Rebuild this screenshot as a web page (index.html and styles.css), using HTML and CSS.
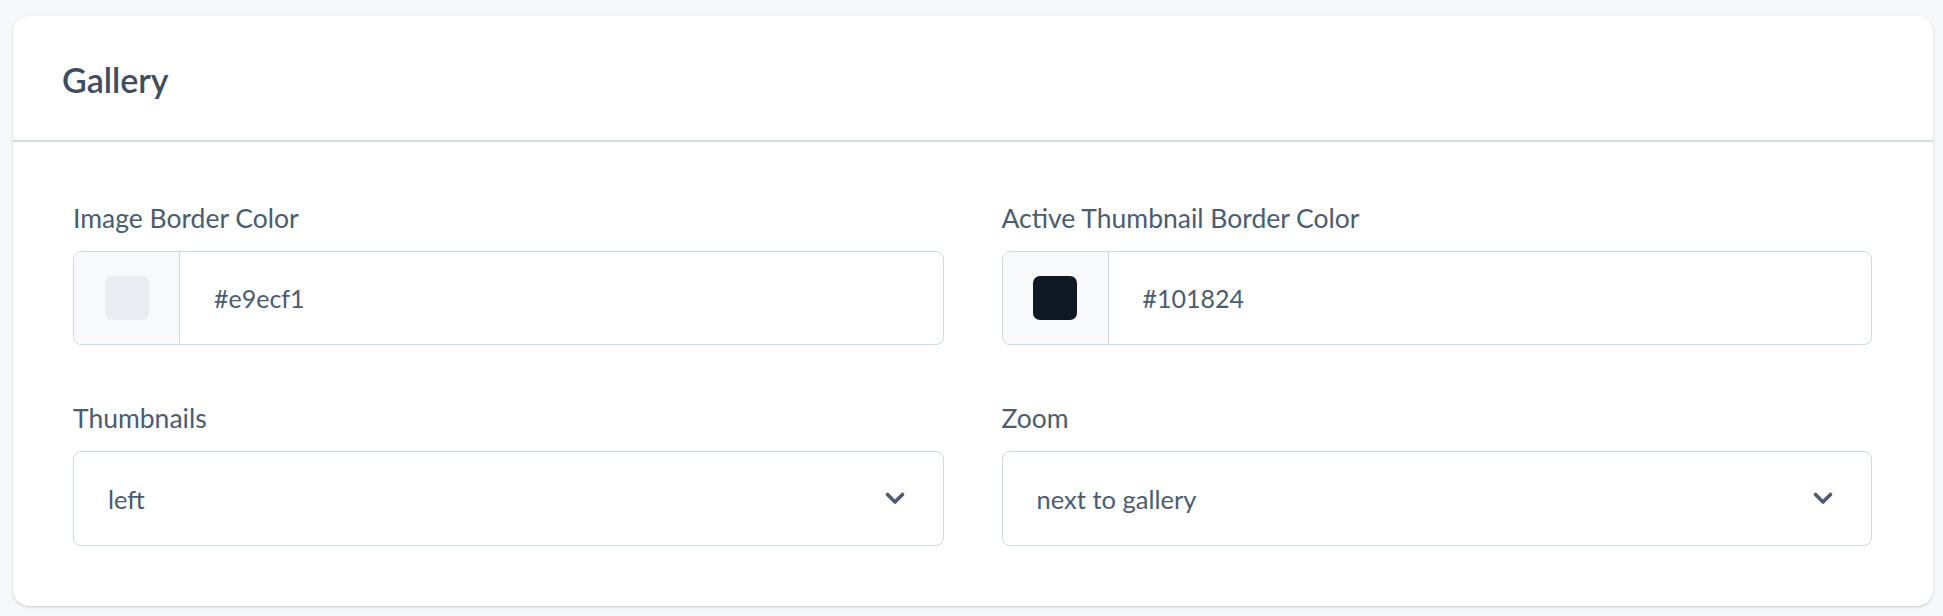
FILE: index.html
```html
<!DOCTYPE html>
<html lang="en">
<head>
<meta charset="utf-8">
<title>Gallery</title>
<link rel="stylesheet" href="styles.css">
</head>
<body>
<section class="card">
  <header class="card-header">
    <h2 class="card-title">Gallery</h2>
  </header>
  <div class="card-body">
    <div class="field">
      <label class="field-label">Image Border Color</label>
      <div class="color-input">
        <div class="swatch-cell"><span class="swatch swatch-light"></span></div>
        <div class="color-value">#e9ecf1</div>
      </div>
    </div>
    <div class="field">
      <label class="field-label">Active Thumbnail Border Color</label>
      <div class="color-input">
        <div class="swatch-cell"><span class="swatch swatch-dark"></span></div>
        <div class="color-value">#101824</div>
      </div>
    </div>
    <div class="field">
      <label class="field-label">Thumbnails</label>
      <div class="select">
        <span class="select-value">left</span>
        <svg class="chevron" width="20" height="13" viewBox="0 0 20 13"><path d="M2.5 2.5 L10 10 L17.5 2.5" fill="none" stroke="currentColor" stroke-width="3.6" stroke-linecap="round" stroke-linejoin="round"/></svg>
      </div>
    </div>
    <div class="field">
      <label class="field-label">Zoom</label>
      <div class="select">
        <span class="select-value">next to gallery</span>
        <svg class="chevron" width="20" height="13" viewBox="0 0 20 13"><path d="M2.5 2.5 L10 10 L17.5 2.5" fill="none" stroke="currentColor" stroke-width="3.6" stroke-linecap="round" stroke-linejoin="round"/></svg>
      </div>
    </div>
  </div>
</section>
</body>
</html>
```

FILE: styles.css
```css
html, body {
  margin: 0;
  padding: 0;
}
body {
  background: #f7f8fa;
  font-family: Lato, "Liberation Sans", sans-serif;
  color: #4b5c70;
  padding: 16px 10px 10px 13px;
}
.card {
  background: #ffffff;
  border-radius: 16px;
  box-shadow: 0 1px 3px rgba(30, 40, 55, 0.18), 0 1px 1px rgba(30, 40, 55, 0.06);
}
.card-header {
  height: 124px;
  display: flex;
  align-items: center;
  padding-left: 49px;
  border-bottom: 2px solid #d3dae1;
}
.card-title {
  margin: 0;
  font-size: 34px;
  font-weight: 600;
  color: #3e4e61;
  line-height: 1.2;
  padding-top: 5px;
}
.card-body {
  display: grid;
  grid-template-columns: 1fr 1fr;
  column-gap: 58px;
  row-gap: 58px;
  padding: 61px 61px 60px 60px;
}
.field {
  display: flex;
  flex-direction: column;
}
.field-label {
  font-size: 26.5px;
  line-height: 30px;
  margin-bottom: 18px;
  color: #4b5c70;
}
.color-input {
  display: flex;
  height: 94px;
  box-sizing: border-box;
  border: 1.5px solid #cfd8e0;
  border-radius: 8px;
  overflow: hidden;
}
.swatch-cell {
  width: 105px;
  flex: none;
  display: flex;
  align-items: center;
  justify-content: center;
  background: #f7f9fb;
  border-right: 1.5px solid #cfd8e0;
}
.swatch {
  width: 44px;
  height: 44px;
  border-radius: 7px;
}
.swatch-light { background: #e9ecf1; }
.swatch-dark { background: #101824; }
.color-value {
  display: flex;
  align-items: center;
  padding-left: 34px;
  font-size: 25px;
  color: #4b5c70;
}
.select {
  display: flex;
  align-items: center;
  justify-content: space-between;
  height: 95px;
  box-sizing: border-box;
  border: 1.5px solid #cfd8e0;
  border-radius: 8px;
  padding: 0 38px 0 34px;
}
.select-value {
  font-size: 25.5px;
  color: #4b5c70;
}
.chevron {
  color: #4b5c70;
  display: block;
}
```
